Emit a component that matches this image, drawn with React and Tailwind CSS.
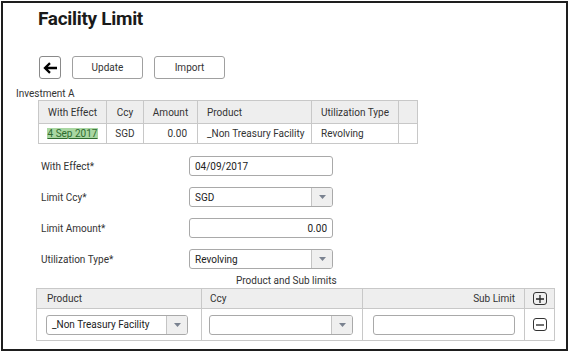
import { useState } from 'react';

function Caret() {
  return (
    <svg width="7" height="4" viewBox="0 0 7 4">
      <path d="M0 0 L7 0 L3.5 4 Z" fill="#7a8290" />
    </svg>
  );
}

function Select({ value, className }) {
  return (
    <div className={`flex h-[20px] border border-[#a9a9a9] rounded-[3px] bg-white overflow-hidden ${className}`}>
      <div className="flex-1 flex items-center px-[5px] text-[10px] text-[#222] whitespace-nowrap">{value}</div>
      <div className="w-[21px] flex items-center justify-center bg-[#efefef] border-l border-[#c4c4c4]">
        <Caret />
      </div>
    </div>
  );
}

function Field({ value, right }) {
  return (
    <div className={`h-[20px] w-[144px] border border-[#a9a9a9] rounded-[3px] bg-white flex items-center px-[5px] text-[10px] text-[#222] ${right ? 'justify-end' : ''}`}>
      {value}
    </div>
  );
}

export default function App() {
  const [rows] = useState([
    { label: 'With Effect*', kind: 'input', value: '04/09/2017' },
    { label: 'Limit Ccy*', kind: 'select', value: 'SGD' },
    { label: 'Limit Amount*', kind: 'input', value: '0.00', right: true },
    { label: 'Utilization Type*', kind: 'select', value: 'Revolving' },
  ]);

  return (
    <div className="w-[571px] h-[352px] bg-white font-['Roboto',sans-serif] text-[#333]">
      <div className="ml-[1px] mt-[1px] w-[567px] h-[350px] border-2 border-[#1e1e1e] flex flex-col">
        {/* title */}
        <h1 className="ml-[35px] mt-[4px] text-[19px] leading-[24px] font-bold text-[#1a1a1a] tracking-[-0.3px]">Facility Limit</h1>

        {/* toolbar */}
        <div className="ml-[36px] mt-[25px] flex items-center gap-[11px]">
          <button className="w-[22px] h-[23px] border border-[#8a8a8a] rounded-[3px] flex items-center justify-center bg-white">
            <svg width="15" height="12" viewBox="0 0 15 12">
              <path d="M14 6 H2.5 M7 1.2 L2 6 L7 10.8" stroke="#000" strokeWidth="2.3" fill="none" />
            </svg>
          </button>
          <button className="w-[71px] h-[23px] border border-[#a0a0a0] rounded-[3px] text-[10px] text-[#333] bg-white">Update</button>
          <button className="w-[71px] h-[23px] border border-[#a0a0a0] rounded-[3px] text-[10px] text-[#333] bg-white">Import</button>
        </div>

        <div className="ml-[13px] mt-[8px] text-[10px] leading-[13px] text-[#333]">Investment A</div>

        {/* summary table */}
        <table className="ml-[35px] w-[380px] border-collapse text-[10px] text-[#333] whitespace-nowrap">
          <thead>
            <tr className="bg-[#eeeeee] h-[23px]">
              <th className="w-[68px] border border-[#c8c8c8] font-normal text-center">With Effect</th>
              <th className="w-[37px] border border-[#c8c8c8] font-normal text-center">Ccy</th>
              <th className="w-[54px] border border-[#c8c8c8] font-normal text-center">Amount</th>
              <th className="w-[114px] border border-[#c8c8c8] font-normal text-left pl-[9px]">Product</th>
              <th className="w-[87px] border border-[#c8c8c8] font-normal text-center">Utilization Type</th>
              <th className="border border-[#c8c8c8]"></th>
            </tr>
          </thead>
          <tbody>
            <tr className="h-[20px]">
              <td className="border border-[#c8c8c8] text-center">
                <span className="bg-[#a9d7a2] text-[#2f6b2f] underline px-[1px]">4 Sep 2017</span>
              </td>
              <td className="border border-[#c8c8c8] text-center">SGD</td>
              <td className="border border-[#c8c8c8] text-right pr-[10px]">0.00</td>
              <td className="border border-[#c8c8c8] pl-[9px]">_Non Treasury Facility</td>
              <td className="border border-[#c8c8c8] pl-[9px]">Revolving</td>
              <td className="border border-[#c8c8c8]"></td>
            </tr>
          </tbody>
        </table>

        {/* form */}
        <div className="ml-[38px] mt-[12px] flex flex-col gap-[11px]">
          {rows.map((r) => (
            <div key={r.label} className="flex items-center h-[20px]">
              <div className="w-[148px] text-[10px] text-[#333]">{r.label}</div>
              {r.kind === 'select' ? (
                <Select value={r.value} className="w-[144px]" />
              ) : (
                <Field value={r.value} right={r.right} />
              )}
            </div>
          ))}
        </div>

        <div className="mt-[5px] ml-[233px] text-[10px] leading-[13px] text-[#333]">Product and Sub limits</div>

        {/* sub limits table */}
        <table className="ml-[33px] mt-[1px] w-[519px] border-collapse text-[10px] text-[#333] whitespace-nowrap">
          <thead>
            <tr className="bg-[#eeeeee] h-[20px]">
              <th className="w-[165px] border border-[#c8c8c8] font-normal text-left pl-[10px]">Product</th>
              <th className="w-[161px] border border-[#c8c8c8] font-normal text-left pl-[8px]">Ccy</th>
              <th className="w-[162px] border border-[#c8c8c8] font-normal text-right pr-[9px]">Sub Limit</th>
              <th className="border border-[#c8c8c8]">
                <div className="mx-auto w-[14px] h-[13px] border border-[#333] rounded-[3px] flex items-center justify-center">
                  <svg width="8" height="8" viewBox="0 0 8 8">
                    <path d="M4 0 V8 M0 4 H8" stroke="#222" strokeWidth="1.3" />
                  </svg>
                </div>
              </th>
            </tr>
          </thead>
          <tbody>
            <tr className="h-[32px]">
              <td className="border border-[#c8c8c8] pl-[9px]">
                <Select value="_Non Treasury Facility" className="w-[142px]" />
              </td>
              <td className="border border-[#c8c8c8] pl-[7px]">
                <Select value="" className="w-[144px]" />
              </td>
              <td className="border border-[#c8c8c8] pl-[10px]">
                <div className="h-[20px] w-[142px] border border-[#a9a9a9] rounded-[3px] bg-white"></div>
              </td>
              <td className="border border-[#c8c8c8]">
                <div className="mx-auto w-[14px] h-[13px] border border-[#333] rounded-[3px] flex items-center justify-center">
                  <svg width="8" height="2" viewBox="0 0 8 2">
                    <path d="M0 1 H8" stroke="#222" strokeWidth="1.3" />
                  </svg>
                </div>
              </td>
            </tr>
          </tbody>
        </table>
      </div>
    </div>
  );
}
